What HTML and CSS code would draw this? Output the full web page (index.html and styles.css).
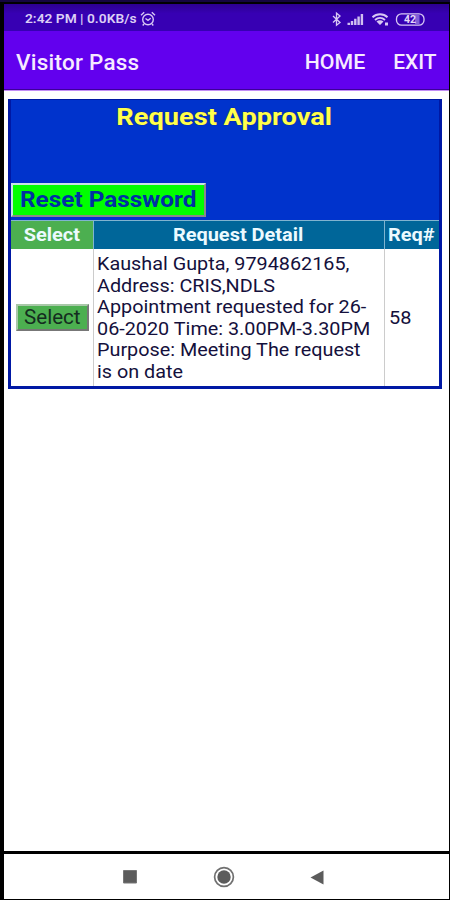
FILE: index.html
```html
<!DOCTYPE html>
<html lang="en">
<head>
<meta charset="utf-8">
<title>Visitor Pass</title>
<link rel="stylesheet" href="styles.css">
</head>
<body>
<div class="phone">
  <div class="status">
    <span class="clock">2:42 PM | 0.0KB/s</span>
    <svg class="alarm" width="16" height="16" viewBox="0 0 16 16" fill="none" stroke="#d8c8f4" stroke-width="1.4"><circle cx="8" cy="8.5" r="5.3"/><path d="M1 4.2 4.2 1.3M15 4.2 11.8 1.3M5.5 7.5 8 9.3l2.7-2M4 13l-1.3 1.5M12 13l1.3 1.5"/></svg>
    <svg class="signals" width="94" height="16" viewBox="0 0 94 16" fill="none" stroke="#d8c8f4" stroke-width="1.3">
      <path d="m2 5 7 6.500-3.500 2.700V2.200L9 5l-7 6.500"/>
      <g stroke="none" fill="#d0c0f0"><path d="M16.500 11.700H19V14h-2.500zM19.800 10h2.400v4h-2.400zM23.100 7.800h2.400V14h-2.400zM26.400 5.400h2.400V14h-2.400zM29.700 3h2.400v11h-2.400z"/></g>
      <path stroke-width="1.900" d="M41.500 6.200c4.300-4 10.800-4 15 0M44 9c3-2.600 7-2.600 10 0"/>
      <path fill="#d8c8f4" stroke="none" d="M45.500 10.500c2-1.700 5-1.700 7 0L49 14zM54 11.500h3v3h-3z"/>
      <rect x="65.500" y="2.800" width="27.500" height="11.400" rx="5"/>
      <path stroke="none" fill="#8060d8" d="M84 4h4.500v9H84z"/>
      <text class="battery" x="73" y="12">42</text>
    </svg>
  </div>
  <header class="appbar">
    <span class="title">Visitor Pass</span>
    <span class="home">HOME</span>
    <span class="exit">EXIT</span>
  </header>
  <main class="page">
    <section class="panel">
      <h1><span>Request Approval</span></h1>
      <button class="reset"><span>Reset Password</span></button>
      <div class="grid">
        <div class="head green"><span>Select</span></div>
        <div class="head"><span>Request Detail</span></div>
        <div class="head"><span>Req#</span></div>
        <div class="cell pick"><button class="select"><span>Select</span></button></div>
        <div class="cell detail">
          <span>Kaushal Gupta, 9794862165,</span>
          <span>Address: CRIS,NDLS</span>
          <span>Appointment requested for 26-</span>
          <span>06-2020 Time: 3.00PM-3.30PM</span>
          <span>Purpose: Meeting The request</span>
          <span>is on date</span>
        </div>
        <div class="cell number"><span>58</span></div>
      </div>
    </section>
  </main>
  <nav class="nav">
    <svg width="14" height="14"><path fill="#5c5c5c" stroke="#777" d="M.5.5h13v12.500H.5z"/></svg>
    <svg width="22" height="22" viewBox="0 0 22 22"><circle cx="11" cy="11" r="9.400" fill="none" stroke="#707070" stroke-width="1.700"/><circle cx="11" cy="11" r="6.700" fill="#5c5c5c"/></svg>
    <svg width="14" height="15"><path fill="#5c5c5c" d="M.5 7.500 13.500.5v14z"/></svg>
  </nav>
</div>
</body>
</html>
```
FILE: styles.css
```css
* { box-sizing: border-box; }
body { margin: 0; font-family: Roboto, "Liberation Sans", sans-serif; background: #000; }
span { display: inline-block; white-space: nowrap; transform-origin: left center; }
.phone {
  height: 900px;
  display: flex;
  flex-direction: column;
  padding: 4px 1.5px 1.5px 4px;
  background: linear-gradient(#140540 0 2px, #000 2px);
}
.status {
  height: 27px;
  flex: none;
  display: flex;
  align-items: center;
  padding: 0 24px 0 21px;
  background: linear-gradient(#2c0090, #3700b3 35%, #3700b3);
}
.clock { color: #dccff5; font-size: 13px; font-weight: 600; line-height: 16px; width: 112px; padding-top: 3px; transform: scaleX(1.06); }
.alarm { margin: 2px 0 0 3px; }
.signals { margin: 2px 0 0 auto; }
.battery { font-size: 10.5px; font-weight: 700; fill: #e4d8fa; stroke: none; }
.appbar {
  height: 59px;
  flex: none;
  display: flex;
  align-items: center;
  padding: 4px 12px 0 12px;
  background: #6200ee;
  border-bottom: 1px solid #3d0099;
  color: #f6eaff;
  font-weight: 500;
}
.title { font-size: 22px; margin-right: auto; letter-spacing: .25px; transform: scaleX(1.02); }
.home, .exit { font-size: 20.5px; transform-origin: right center; }
.home { margin-right: 29px; transform: scaleX(1.04); }
.exit { transform: scaleX(1.02); }
.page { flex: 1; background: #fff; border-top: 1px solid #c28cf6; padding: 8px 7px 0 3.5px; }
.panel {
  height: 289.5px;
  border: 3px solid #0018a4;
  border-top-width: 1px;
  background: #0033cc;
  display: flex;
  flex-direction: column;
}
h1 { margin: 0; height: 83px; padding-top: 2px; text-align: center; font-size: 24.5px; line-height: 30px; color: #ffff4d; font-weight: 700; }
h1 span { text-shadow: 0 0 1px #222a40; transform: scaleX(1.11); transform-origin: center; }
button { font-family: inherit; padding: 0; border-radius: 0; text-align: left; }
.reset { width: 195px; height: 34px; flex: none; margin: 0 0 3px; padding-left: 7px; border: 2px solid; border-color: #c6e4e4 #8a8a8a #8a8a8a #c6e4e4; background: #00ff00; color: #0030a4; font-size: 22px; font-weight: 700; line-height: 28px; }
.reset span { transform: scaleX(1.107); }
.grid { flex: 1; display: grid; grid-template-columns: 82px 1fr 55px; grid-template-rows: 29px 1fr; }
.head { background: #006699; color: #ecfaff; font-size: 19px; font-weight: 700; line-height: 27px; text-align: center; border-top: 1px solid #80b4d0; border-left: 1px solid #80b4d0; }
.head span { transform: scaleX(1.05); transform-origin: center; }
.green { background: #4caf50; border-left: 0; }
.cell { background: #fff; color: #14103c; font-size: 19px; border-left: 1px solid #ccc; }
.pick { border-left: 0; display: flex; align-items: center; padding: 0 0 0 5px; }
.select { width: 73px; height: 27px; padding-left: 6px; border: 2px solid; border-color: #a8c8a8 #777 #777 #a8c8a8; background: #4caf50; color: #142c20; font-size: 20px; line-height: 23px; }
.select span { transform: scaleX(1.03); }
.detail { display: flex; flex-direction: column; align-items: flex-start; line-height: 21.5px; padding: 4px 0 0 3.5px; }
.detail span { transform: scaleX(1.042); }
.number { display: flex; align-items: center; padding: 0 0 0 4px; }
.number span { transform: scaleX(1.05); }
.nav { height: 47.5px; flex: none; border-top: 3px solid #000; background: #fff; display: flex; align-items: center; padding: 2px 0 0 119px; }
.nav svg:nth-child(2) { margin: 0 75px 0 76px; }
```
